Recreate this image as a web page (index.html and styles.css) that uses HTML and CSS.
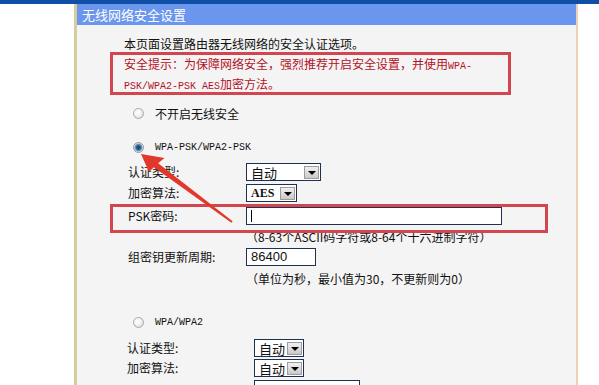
FILE: index.html
```html
<!DOCTYPE html>
<html lang="zh-CN">

<head>
  <meta charset="UTF-8">
  <title>无线网络安全设置</title>
  <link rel="stylesheet" href="styles.css">
</head>

<body>
  <div class="topbar"></div>

  <div class="panel">
    <div class="panel-title">无线网络安全设置</div>

    <div class="panel-body">
      <p class="intro">本页面设置路由器无线网络的安全认证选项。</p>

      <div class="notice">
        安全提示：为保障网络安全，强烈推荐开启安全设置，并使用<span class="en">WPA-</span><br>
        <span class="en">PSK/WPA2-PSK AES</span>加密方法。
      </div>

      <div class="radio-row first"><span class="radio"></span>不开启无线安全</div>
      <div class="radio-row second"><span class="radio checked"></span><span class="en">WPA-PSK/WPA2-PSK</span></div>

      <div class="field auth">
        <span class="label">认证类型:</span>
        <div class="select big"><span>自动</span><span class="drop"></span></div>
      </div>
      <div class="field enc">
        <span class="label">加密算法:</span>
        <div class="select aes"><span class="serif">AES</span><span class="drop"></span></div>
      </div>

      <div class="field psk">
        <span class="label">PSK密码:</span>
        <div class="input long"><span class="caret"></span></div>
      </div>
      <div class="hint hint-psk">（8-63个ASCII码字符或8-64个十六进制字符）</div>

      <div class="field period">
        <span class="label">组密钥更新周期:</span>
        <div class="input short">86400</div>
      </div>
      <div class="hint hint-period">（单位为秒，最小值为30，不更新则为0）</div>

      <div class="radio-row third"><span class="radio"></span><span class="en">WPA/WPA2</span></div>

      <div class="field wide auth2">
        <span class="label">认证类型:</span>
        <div class="select small"><span>自动</span><span class="drop"></span></div>
      </div>
      <div class="field wide enc2">
        <span class="label">加密算法:</span>
        <div class="select small"><span>自动</span><span class="drop"></span></div>
      </div>
      <div class="field wide psk2">
        <span class="label"></span>
        <div class="input mid"></div>
      </div>
    </div>
  </div>

  <!-- red annotation arrow pointing at the selected option -->
  <svg class="arrow" width="599" height="385" viewBox="0 0 599 385">
    <polygon points="150.4,164.8 154.0,160.0 232.6,221.2 231.4,222.8" fill="#e2382c" />
    <polygon points="141,154 164.5,158 156,165 149,172" fill="#e2382c" />
  </svg>
</body>

</html>
```

FILE: styles.css
```css
* {
  margin: 0;
  padding: 0;
  box-sizing: border-box;
}

body {
  background: #fff;
  color: #111;
  font-family: "Noto Sans CJK SC", "Liberation Sans", sans-serif;
  font-size: 12px;
  width: 599px;
  height: 385px;
  overflow: hidden;
  position: relative;
}

.topbar {
  height: 4px;
  background: #0f4fa6;
}

.panel {
  margin-left: 74px;
  width: 504px;
  height: 381px;
  background: #f4f4f4;
  border-left: 3px solid #d6cc9e;
  border-right: 2px solid #ecd1b6;
}

.panel-title {
  height: 21px;
  line-height: 21px;
  background: #6a96ee;
  color: #fff;
  font-size: 13px;
  padding-left: 5px;
}

.en {
  font-family: "Liberation Mono", monospace;
  font-size: 10px;
}

.serif {
  font-family: "Liberation Serif", serif;
  font-weight: bold;
  font-size: 12px;
}

.intro {
  margin: 11px 0 0 47px;
  height: 16px;
  line-height: 16px;
}

.notice {
  margin-left: 33px;
  width: 401px;
  height: 43px;
  border: 3px solid #d2464f;
  padding-left: 11px;
  line-height: 17px;
  color: #b3121f;
  white-space: nowrap;
}

.radio-row {
  display: flex;
  align-items: center;
  gap: 11px;
  height: 18px;
  margin-left: 56px;
}

.radio-row.first {
  margin-top: 9px;
}

.radio-row.second {
  margin-top: 16px;
}

.radio-row.third {
  margin-top: 27px;
}

.radio {
  width: 11px;
  height: 11px;
  border-radius: 50%;
  border: 1px solid #a9a9a9;
  background: radial-gradient(circle at 40% 40%, #fff 0, #f2f2f2 45%, #cfcfcf 100%);
}

.radio.checked {
  border-color: #8e9aa6;
  background: radial-gradient(circle, #173f66 0, #2c5d88 2px, #7fa3c0 3.5px, #dfe6ec 4.5px, #fff 100%);
}

.field {
  display: flex;
  align-items: center;
  height: 18px;
  margin-left: 51px;
}

.field .label {
  width: 118px;
  flex-shrink: 0;
  line-height: 18px;
}

.field.wide {
  margin-left: 50px;
}

.field.wide .label {
  width: 127px;
}

.auth {
  margin-top: 7px;
}

.enc {
  margin-top: 3px;
}

.psk {
  margin: 2px 0 0 33px;
  width: 438px;
  height: 29px;
  border: 3px solid #d2464f;
  padding: 0 0 5px 15px;
  position: relative;
  z-index: 1;
}

.auth2 {
  margin-top: 8px;
}

.enc2 {
  margin-top: 2px;
}

.psk2 {
  margin-top: 3px;
}

.select {
  display: flex;
  align-items: center;
  justify-content: space-between;
  height: 18px;
  border: 1px solid #1e3150;
  background: #fff;
  padding: 0 1px 0 4px;
  font-size: 13px;
}

.select.big {
  width: 75px;
}

.select.aes {
  width: 51px;
}

.select.small {
  width: 50px;
  padding-left: 4px;
}

.drop {
  width: 15px;
  height: 13px;
  border: 1px solid #9c9c9c;
  background: linear-gradient(#f0f0f0, #c9c9c9);
  position: relative;
}

.drop::after {
  content: '';
  position: absolute;
  left: 3px;
  top: 4px;
  border-left: 4px solid transparent;
  border-right: 4px solid transparent;
  border-top: 4px solid #000;
}

.input {
  height: 18px;
  border: 1px solid #1e3150;
  background: #fff;
  padding-left: 4px;
  font-family: "Liberation Sans", sans-serif;
  font-size: 13px;
  line-height: 16px;
}

.input.long {
  width: 256px;
}

.input.short {
  width: 70px;
}

.input.mid {
  width: 106px;
}

.caret {
  display: block;
  width: 1px;
  height: 12px;
  margin-top: 2px;
  background: #000;
}

.hint {
  margin-left: 169px;
  height: 14px;
  line-height: 14px;
}

.hint-psk {
  margin-top: -3px;
}

.hint-period {
  margin-top: 6px;
}

.period {
  margin-top: 4px;
}

.arrow {
  position: absolute;
  left: 0;
  top: 0;
  pointer-events: none;
  z-index: 2;
}
```
